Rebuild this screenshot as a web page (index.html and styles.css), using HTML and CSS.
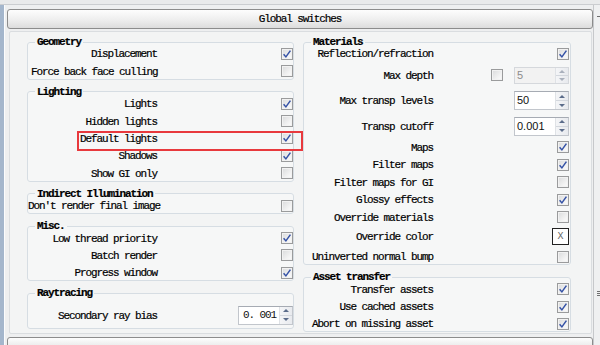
FILE: index.html
```html
<!DOCTYPE html>
<html>
<head>
<meta charset="utf-8">
<link rel="stylesheet" href="styles.css">
</head>
<body>
<div class="page">
  <div class="topbar"></div>
  <div class="body">
    <div class="edge"></div>
    <div class="main">
      <div class="rollout-head">Global switches</div>
      <div class="panel">
        <div class="col col-left">
          <fieldset class="grp">
            <legend>Geometry</legend>
            <div class="row"><span class="lbl">Displacement</span><span class="cb on"><svg viewBox="0 0 10 10"><path d="M1.6 5.2 L3.9 7.9 L8.4 1.6"/></svg></span></div>
            <div class="row"><span class="lbl">Force back face culling</span><span class="cb"></span></div>
          </fieldset>
          <fieldset class="grp">
            <legend>Lighting</legend>
            <div class="row"><span class="lbl">Lights</span><span class="cb on"><svg viewBox="0 0 10 10"><path d="M1.6 5.2 L3.9 7.9 L8.4 1.6"/></svg></span></div>
            <div class="row"><span class="lbl">Hidden lights</span><span class="cb"></span></div>
            <div class="row"><span class="lbl">Default lights</span><span class="cb on"><svg viewBox="0 0 10 10"><path d="M1.6 5.2 L3.9 7.9 L8.4 1.6"/></svg></span></div>
            <div class="row"><span class="lbl">Shadows</span><span class="cb on"><svg viewBox="0 0 10 10"><path d="M1.6 5.2 L3.9 7.9 L8.4 1.6"/></svg></span></div>
            <div class="row"><span class="lbl">Show GI only</span><span class="cb"></span></div>
          </fieldset>
          <fieldset class="grp">
            <legend>Indirect Illumination</legend>
            <div class="row"><span class="lbl lbl-wide">Don't render final image</span><span class="cb"></span></div>
          </fieldset>
          <fieldset class="grp">
            <legend>Misc.</legend>
            <div class="row"><span class="lbl">Low thread priority</span><span class="cb on"><svg viewBox="0 0 10 10"><path d="M1.6 5.2 L3.9 7.9 L8.4 1.6"/></svg></span></div>
            <div class="row"><span class="lbl">Batch render</span><span class="cb"></span></div>
            <div class="row"><span class="lbl">Progress window</span><span class="cb on"><svg viewBox="0 0 10 10"><path d="M1.6 5.2 L3.9 7.9 L8.4 1.6"/></svg></span></div>
          </fieldset>
          <fieldset class="grp grp-ray">
            <legend>Raytracing</legend>
            <div class="row row-ray"><span class="lbl">Secondary ray bias</span>
              <span class="spin"><span class="spin-val mono">0. 001</span><span class="spin-btns"><span class="up"></span><span class="dn"></span></span></span>
            </div>
          </fieldset>
        </div>
        <div class="col col-right">
          <fieldset class="grp">
            <legend>Materials</legend>
            <div class="row"><span class="lbl">Reflection/refraction</span><span class="cb on"><svg viewBox="0 0 10 10"><path d="M1.6 5.2 L3.9 7.9 L8.4 1.6"/></svg></span></div>
            <div class="row row-tall"><span class="lbl">Max depth</span><span class="cb cb-mid"></span>
              <span class="spin spin-off"><span class="spin-val">5</span><span class="spin-btns"><span class="up"></span><span class="dn"></span></span></span>
            </div>
            <div class="row row-tall"><span class="lbl">Max transp levels</span>
              <span class="spin"><span class="spin-val">50</span><span class="spin-btns"><span class="up"></span><span class="dn"></span></span></span>
            </div>
            <div class="row row-tall"><span class="lbl">Transp cutoff</span>
              <span class="spin"><span class="spin-val">0.001</span><span class="spin-btns"><span class="up"></span><span class="dn"></span></span></span>
            </div>
            <div class="row"><span class="lbl">Maps</span><span class="cb on"><svg viewBox="0 0 10 10"><path d="M1.6 5.2 L3.9 7.9 L8.4 1.6"/></svg></span></div>
            <div class="row"><span class="lbl">Filter maps</span><span class="cb on"><svg viewBox="0 0 10 10"><path d="M1.6 5.2 L3.9 7.9 L8.4 1.6"/></svg></span></div>
            <div class="row"><span class="lbl">Filter maps for GI</span><span class="cb"></span></div>
            <div class="row"><span class="lbl">Glossy effects</span><span class="cb on"><svg viewBox="0 0 10 10"><path d="M1.6 5.2 L3.9 7.9 L8.4 1.6"/></svg></span></div>
            <div class="row"><span class="lbl">Override materials</span><span class="cb"></span></div>
            <div class="row row-color"><span class="lbl">Override color</span><span class="swatch">X</span></div>
            <div class="row"><span class="lbl">Uninverted normal bump</span><span class="cb"></span></div>
          </fieldset>
          <fieldset class="grp">
            <legend>Asset transfer</legend>
            <div class="row"><span class="lbl">Transfer assets</span><span class="cb on"><svg viewBox="0 0 10 10"><path d="M1.6 5.2 L3.9 7.9 L8.4 1.6"/></svg></span></div>
            <div class="row"><span class="lbl">Use cached assets</span><span class="cb on"><svg viewBox="0 0 10 10"><path d="M1.6 5.2 L3.9 7.9 L8.4 1.6"/></svg></span></div>
            <div class="row"><span class="lbl">Abort on missing asset</span><span class="cb on"><svg viewBox="0 0 10 10"><path d="M1.6 5.2 L3.9 7.9 L8.4 1.6"/></svg></span></div>
          </fieldset>
        </div>
      </div>
      <div class="rollout-head rollout-next"></div>
    </div>
    <div class="strip"><span class="mark-dash"></span><span class="mark-grip"></span></div>
  </div>
  <div class="highlight"></div>
</div>
</body>
</html>
```

FILE: styles.css
```css
html, body {
  margin: 0;
  padding: 0;
}
body {
  background: #eeeff0;
  font-family: "Liberation Mono", "DejaVu Sans Mono", monospace;
  font-size: 11px;
  letter-spacing: -1.1px;
  color: #000;
  -webkit-text-stroke: 0.2px #000;
}
.page {
  position: relative;
  width: 600px;
  height: 345px;
  overflow: hidden;
}
.topbar {
  height: 4px;
  background: #e9eaeb;
  border-bottom: 1px solid #cbcdd0;
}
.body {
  display: flex;
  height: 340px;
}
.edge {
  width: 4px;
  flex: none;
  background: #a4b6cc;
  border-right: 1px solid #fbfcfd;
}
.main {
  width: 588px;
  flex: none;
}
.rollout-head {
  box-sizing: border-box;
  margin: 4px 0 0 2px;
  width: 586px;
  height: 20px;
  border: 1px solid #8c8c8c;
  border-radius: 3px;
  background: linear-gradient(#fdfdfd, #eeeeee 55%, #dcdcdc);
  text-align: center;
  line-height: 18px;
}
.rollout-next {
  margin-top: 3px;
  height: 14px;
}
.panel {
  box-sizing: border-box;
  margin: 2px 0 0 4px;
  width: 583px;
  height: 303px;
  border: 1px solid #dadde0;
  border-radius: 2px;
  background: #f3f4f4;
  padding: 8px 0 0 17px;
  display: flex;
  gap: 9px;
}
.col {
  display: flex;
  flex-direction: column;
  gap: 10px;
}
.col-left { width: 267px; }
.col-right { width: 268px; }
.grp {
  margin: 0;
  padding: 0;
  min-width: 0;
  border: 1px solid #d6dde3;
  border-radius: 3px;
  background: #f6f7f7;
}
.grp legend {
  margin-left: 7px;
  padding: 0 2px;
  line-height: 4px;
  font-weight: bold;
}
.row {
  display: flex;
  align-items: center;
  height: 15px;
  margin-top: 2.4px;
  padding-left: 3px;
  white-space: nowrap;
}
.row .lbl {
  position: relative;
  top: 0.5px;
}
.row-tall { height: 23px; }
.row-color { height: 20px; }
.grp-ray { padding-bottom: 3px; }
.row-ray {
  margin-top: 10px;
  height: 20px;
}
.lbl {
  flex: none;
  width: 126px;
  text-align: right;
}
.lbl-wide {
  margin-left: -3px;
}
.cb {
  box-sizing: border-box;
  flex: none;
  margin-left: auto;
  margin-right: 0;
  width: 12px;
  height: 12px;
  border: 1px solid #9a9b9c;
  background: linear-gradient(135deg, #d9dadb, #f4f4f4 70%, #fbfbfb);
  box-shadow: inset 0 0 0 1px #f2f2f2;
  display: flex;
  align-items: center;
  justify-content: center;
}
.col-right .cb { margin-right: 1px; }
.cb svg {
  width: 10px;
  height: 10px;
}
.cb svg path {
  fill: none;
  stroke: #3552a6;
  stroke-width: 1.5;
}
.col-right .cb-mid { margin-right: 0; }
.spin {
  box-sizing: border-box;
  flex: none;
  margin-left: auto;
  margin-right: 1px;
  width: 55px;
  height: 19px;
  border: 1px solid #c2c6cc;
  border-top-color: #a6abb3;
  background: #fff;
  display: flex;
  align-items: stretch;
  -webkit-text-stroke: 0;
}
.cb-mid + .spin {
  margin-left: 11px;
  height: 17px;
}
.col-left .spin { margin-right: 0; }
.spin-val {
  flex: 1;
  padding-left: 2px;
  font-family: "Liberation Sans", Arial, sans-serif;
  letter-spacing: 0;
  font-size: 11px;
  line-height: 17px;
  color: #111;
}
.spin-val.mono {
  font-family: "Liberation Mono", monospace;
  letter-spacing: -1.1px;
  padding-left: 4px;
}
.spin-off {
  background: #f2f2f2;
  border-color: #d5d8dc;
}
.spin-off .spin-val {
  color: #8c8c8c;
  line-height: 15px;
}
.spin-btns {
  flex: none;
  width: 12px;
  display: flex;
  flex-direction: column;
  border-left: 1px solid #dfe2e6;
  background: linear-gradient(90deg, #f4f5f7, #e8eaee);
}
.spin-btns span {
  flex: 1;
  display: flex;
  align-items: center;
  justify-content: center;
}
.spin-btns .up { border-bottom: 1px solid #d3d7dd; }
.spin-btns .up::before {
  content: "";
  border-left: 3px solid transparent;
  border-right: 3px solid transparent;
  border-bottom: 3px solid #5b6c8a;
}
.spin-btns .dn::before {
  content: "";
  border-left: 3px solid transparent;
  border-right: 3px solid transparent;
  border-top: 3px solid #5b6c8a;
}
.spin-off .spin-btns .up::before { border-bottom-color: #a9b0bc; }
.spin-off .spin-btns .dn::before { border-top-color: #a9b0bc; }
.swatch {
  box-sizing: border-box;
  flex: none;
  margin-left: auto;
  margin-right: 1px;
  width: 17px;
  height: 17px;
  border: 1px solid #222;
  background: #fff;
  color: #666;
  font-size: 10px;
  letter-spacing: 0;
  text-align: center;
  line-height: 15px;
  -webkit-text-stroke: 0;
}
.strip {
  flex: none;
  width: 6px;
  border-left: 1px solid #c6c8cb;
  background: #eff0f1;
  display: flex;
  flex-direction: column;
  padding-left: 3px;
}
.mark-dash {
  margin-top: 11px;
  width: 4px;
  height: 1px;
  background: #6d6d6d;
}
.mark-grip {
  margin-top: 274px;
  width: 4px;
  height: 5px;
  background: repeating-linear-gradient(#707070 0 1px, transparent 1px 2px);
}
.highlight {
  position: absolute;
  left: 77px;
  top: 131px;
  width: 226px;
  height: 20px;
  box-sizing: border-box;
  border: 2px solid #e8393d;
}
```
